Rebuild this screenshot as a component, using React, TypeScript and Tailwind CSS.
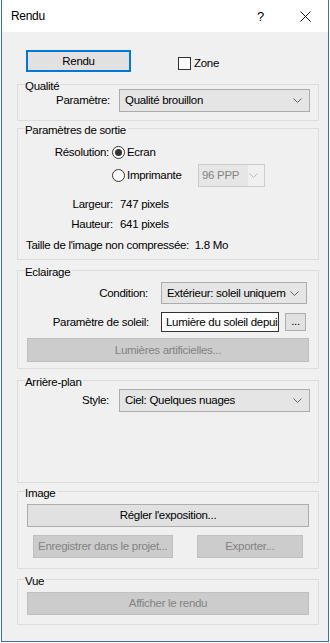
import type { ReactNode } from 'react'

function Chevron({ disabled = false }: { disabled?: boolean }) {
  return (
    <svg width="9" height="5" viewBox="0 0 9 5" className="shrink-0">
      <polyline
        points="0.5,0.5 4.5,4.5 8.5,0.5"
        fill="none"
        stroke={disabled ? '#bcbcbc' : '#606060'}
        strokeWidth="1"
      />
    </svg>
  )
}

function Select({ value, className = '' }: { value: string; className?: string }) {
  return (
    <div
      className={`flex items-center justify-between gap-[4px] border border-[#acacac] bg-[#e5e5e5] pl-[5px] pr-[7px] ${className}`}
    >
      <span className="overflow-hidden">{value}</span>
      <Chevron />
    </div>
  )
}

function Button({
  label,
  disabled = false,
  className = '',
}: {
  label: string
  disabled?: boolean
  className?: string
}) {
  return (
    <div
      className={`flex items-center justify-center border ${
        disabled
          ? 'border-[#bfbfbf] bg-[#cccccc] text-[#838383]'
          : 'border-[#adadad] bg-[#e1e1e1] text-black'
      } ${className}`}
    >
      {label}
    </div>
  )
}

function Radio({ checked = false }: { checked?: boolean }) {
  return (
    <div className="flex h-[13px] w-[13px] shrink-0 items-center justify-center rounded-full border border-[#333333] bg-white">
      {checked && <div className="h-[7px] w-[7px] rounded-full bg-[#333333]" />}
    </div>
  )
}

function GroupBox({
  title,
  className = '',
  children,
}: {
  title: string
  className?: string
  children?: ReactNode
}) {
  return (
    <div className={`relative ml-[15px] w-[302px] border border-[#dcdcdc] ${className}`}>
      <span className="absolute left-[7px] top-[-6px] bg-[#f0f0f0] pr-[2px] leading-[15px] text-black">
        {title}
      </span>
      {children}
    </div>
  )
}

export default function App() {
  return (
    <div className="h-[643px] w-[330px] whitespace-nowrap bg-white font-['Liberation_Sans',Arial,sans-serif] text-[11.5px] leading-[15px] tracking-[-0.3px] text-black">
      <div className="ml-px flex h-[642px] w-[328px] flex-col border-x border-b border-[#3d6fb6]">
        {/* Title bar */}
        <div className="flex h-[32px] shrink-0 items-center bg-white">
          <span className="ml-[9px] text-[12px]">Rendu</span>
          <span className="ml-auto text-[13px]">?</span>
          <svg width="11" height="11" viewBox="0 0 11 11" className="ml-[36px] mr-[17px]">
            <path d="M0.5 0.5 L10.5 10.5 M10.5 0.5 L0.5 10.5" stroke="#111" strokeWidth="1" />
          </svg>
        </div>

        {/* Content */}
        <div className="flex flex-1 flex-col bg-[#f0f0f0]">
          <div className="mt-[18px] flex items-center">
            <div className="ml-[24px] flex h-[22px] w-[105px] items-center justify-center border-2 border-[#0078d7] bg-[#e1e1e1]">
              Rendu
            </div>
            <div className="ml-[47px] mt-[4px] flex items-center">
              <div className="h-[13px] w-[13px] border border-[#333333] bg-white" />
              <span className="ml-[3px]">Zone</span>
            </div>
          </div>

          {/* Qualité */}
          <GroupBox title="Qualité" className="mt-[12px] h-[37px]">
            <div className="mt-[4px] flex items-center">
              <span className="w-[92px] text-right">Paramètre:</span>
              <Select value="Qualité brouillon" className="ml-[9px] h-[23px] w-[191px]" />
            </div>
          </GroupBox>

          {/* Paramètres de sortie */}
          <GroupBox title="Paramètres de sortie" className="mt-[7px] h-[132px]">
            <div className="mt-[17px] flex h-[13px] items-center">
              <span className="w-[91px] text-right">Résolution:</span>
              <div className="ml-[3px] flex items-center">
                <Radio checked />
                <span className="ml-[2px]">Ecran</span>
              </div>
            </div>
            <div className="mt-[5px] flex h-[23px] items-center">
              <div className="ml-[94px] flex w-[86px] items-center">
                <Radio />
                <span className="ml-[2px]">Imprimante</span>
              </div>
              <div className="flex h-[23px] w-[67px] items-center justify-between border border-[#cccccc] bg-[#f0f0f0] pr-[6px]">
                <span className="flex h-full items-center bg-[#e6e6e6] pl-[3px] pr-[9px] text-[#838383]">
                  96 PPP
                </span>
                <Chevron disabled />
              </div>
            </div>
            <div className="mt-[10px] flex">
              <span className="w-[95px] text-right">Largeur:</span>
              <span className="ml-[7px]">747 pixels</span>
            </div>
            <div className="mt-[5px] flex">
              <span className="w-[95px] text-right">Hauteur:</span>
              <span className="ml-[7px]">641 pixels</span>
            </div>
            <div className="ml-[8px] mt-[6px]">Taille de l'image non compressée:&nbsp; 1.8 Mo</div>
          </GroupBox>

          {/* Eclairage */}
          <GroupBox title="Eclairage" className="mt-[10px] h-[99px]">
            <div className="mt-[11px] flex items-center">
              <span className="w-[130px] text-right">Condition:</span>
              <Select value="Extérieur: soleil uniqueme" className="ml-[13px] h-[22px] w-[146px]" />
            </div>
            <div className="mt-[8px] flex items-center">
              <span className="w-[131px] text-right">Paramètre de soleil:</span>
              <div className="ml-[12px] flex h-[20px] w-[118px] items-center overflow-hidden border border-[#333333] bg-white pl-[4px]">
                Lumière du soleil depuis
              </div>
              <div className="ml-[6px] flex h-[18px] w-[21px] items-end justify-center border border-[#adadad] bg-[#e1e1e1] pb-[1px]">
                ...
              </div>
            </div>
            <div className="mt-[6px] px-[9px]">
              <Button label="Lumières artificielles..." disabled className="h-[24px]" />
            </div>
          </GroupBox>

          {/* Arrière-plan */}
          <GroupBox title="Arrière-plan" className="mt-[11px] h-[103px]">
            <div className="mt-[8px] flex items-center">
              <span className="w-[91px] text-right">Style:</span>
              <Select value="Ciel: Quelques nuages" className="ml-[10px] h-[23px] w-[191px]" />
            </div>
          </GroupBox>

          {/* Image */}
          <GroupBox title="Image" className="mt-[8px] h-[78px]">
            <div className="mt-[12px] px-[9px]">
              <Button label="Régler l'exposition..." className="h-[23px]" />
            </div>
            <div className="mt-[8px] flex px-[15px]">
              <Button label="Enregistrer dans le projet..." disabled className="h-[23px] w-[143px]" />
              <Button label="Exporter..." disabled className="ml-[24px] h-[23px] w-[109px]" />
            </div>
          </GroupBox>

          {/* Vue */}
          <GroupBox title="Vue" className="mt-[10px] h-[46px]">
            <div className="mt-[12px] px-[9px]">
              <Button label="Afficher le rendu" disabled className="h-[23px]" />
            </div>
          </GroupBox>
        </div>
      </div>
    </div>
  )
}
